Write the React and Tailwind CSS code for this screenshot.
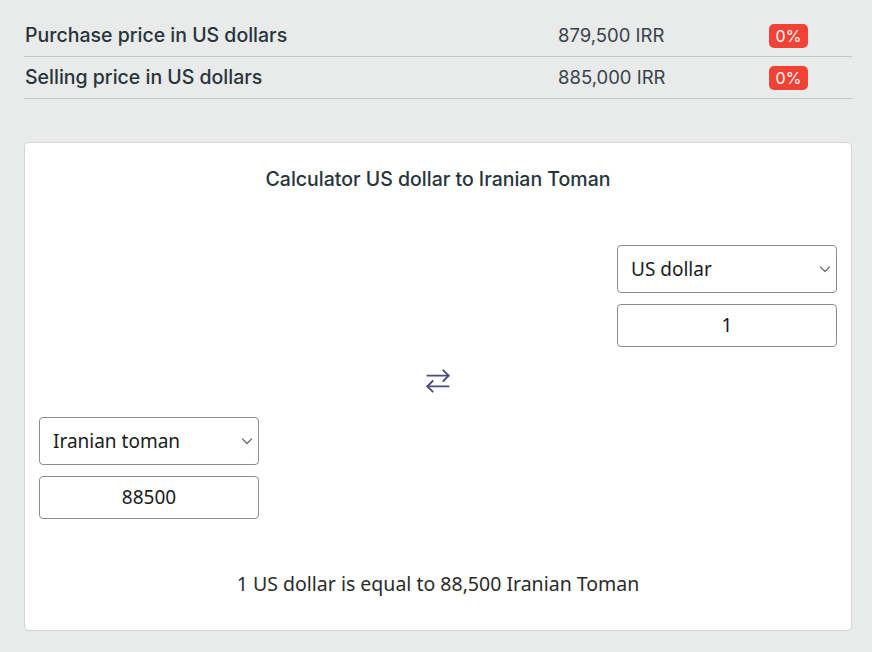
import React from "react";

function SwapIcon() {
  return (
    <svg width="32" height="32" viewBox="0 0 24 24" fill="none" stroke="#4b4a7e" strokeWidth="1.4" strokeLinecap="round" strokeLinejoin="round">
      <path d="m16 4 4 4-4 4" />
      <path d="M20 8H4" />
      <path d="m8 20-4-4 4-4" />
      <path d="M4 16h16" />
    </svg>
  );
}

function Chevron() {
  return (
    <svg width="12" height="8" viewBox="0 0 12 8" fill="none" stroke="#6b6b6b" strokeWidth="1.2" strokeLinecap="round" strokeLinejoin="round">
      <path d="M1.5 2 6 6.5 10.5 2" />
    </svg>
  );
}

function Group({ label, value }) {
  return (
    <div className="flex flex-col w-[220px]">
      <div className="h-[48px] border border-[#8c8c8c] rounded-[4px] flex items-center justify-between pl-[13px] pr-[5px] bg-white">
        <span className="text-[19px] text-[#1a1a1a]">{label}</span>
        <Chevron />
      </div>
      <div className="mt-[11px] h-[43px] border border-[#8c8c8c] rounded-[4px] flex items-center justify-center bg-white text-[19px] text-[#1a1a1a]">
        {value}
      </div>
    </div>
  );
}

function Row({ label, price }) {
  return (
    <div className="flex items-center h-[42px] border-b-[1.5px] border-[#c6c6c6] pl-[1px]">
      <div className="flex-1 text-[19.5px] font-medium text-[#27343c]" style={{ fontFamily: "Inter, sans-serif" }}>{label}</div>
      <div className="w-[211px] text-[18.5px] text-[#38434a]" style={{ fontFamily: "Inter, sans-serif" }}>{price}</div>
      <div className="w-[83px]">
        <span className="inline-flex items-center justify-center w-[39px] h-[24px] rounded-[5px] bg-[#f24236] text-white text-[16px]" style={{ fontFamily: "Inter, sans-serif" }}>0%</span>
      </div>
    </div>
  );
}

export default function App() {
  return (
    <div className="w-[872px] h-[652px] bg-[#e9eaea] pl-[24px] pr-[20px] pt-[15px]" style={{ fontFamily: "'Noto Sans', sans-serif" }}>
      <div>
        <Row label="Purchase price in US dollars" price="879,500 IRR" />
        <Row label="Selling price in US dollars" price="885,000 IRR" />
      </div>
      <div className="mt-[43px] bg-white border border-[#d4d4d4] rounded-[5px] h-[489px] px-[14px] pt-[24px] flex flex-col">
        <div className="text-center text-[19.5px] font-medium text-[#27343c] leading-[24px]" style={{ fontFamily: "Inter, sans-serif" }}>
          Calculator US dollar to Iranian Toman
        </div>
        <div className="mt-[54px] flex justify-end">
          <Group label="US dollar" value="1" />
        </div>
        <div className="mt-[18px] flex justify-center">
          <SwapIcon />
        </div>
        <div className="mt-[20px] flex justify-start">
          <Group label="Iranian toman" value="88500" />
        </div>
        <div className="mt-[53px] text-center text-[19.5px] leading-[24px] text-[#2a2a2a]">
          1 US dollar is equal to 88,500 Iranian Toman
        </div>
      </div>
    </div>
  );
}
